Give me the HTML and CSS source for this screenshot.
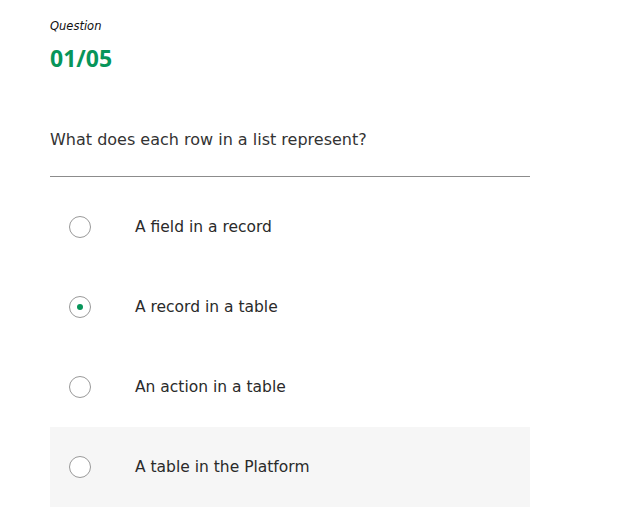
FILE: index.html
```html
<!DOCTYPE html>
<html lang="en">
<head>
    <meta charset="UTF-8">
    <meta name="viewport" content="width=device-width, initial-scale=1.0">
    <title>Quiz</title>
    <link rel="stylesheet" href="styles.css">
</head>
<body>
    <main class="quiz">
        <div class="label">Question</div>
        <div class="counter">01/05</div>
        <p class="question">What does each row in a list represent?</p>
        <div class="options">
            <label class="option">
                <span class="radio"></span>
                <span class="option-text">A field in a record</span>
            </label>
            <label class="option">
                <span class="radio checked"></span>
                <span class="option-text">A record in a table</span>
            </label>
            <label class="option">
                <span class="radio"></span>
                <span class="option-text">An action in a table</span>
            </label>
            <label class="option hover">
                <span class="radio"></span>
                <span class="option-text">A table in the Platform</span>
            </label>
        </div>
    </main>
</body>
</html>
```

FILE: styles.css
```css
body {
    font-family: "DejaVu Sans", "Liberation Sans", sans-serif;
    margin: 0;
    padding: 0;
    background-color: #ffffff;
    color: #222;
}
.quiz {
    width: 480px;
    padding: 19px 0 0 50px;
}
.label {
    font-size: 11.5px;
    font-style: italic;
    line-height: 15px;
    color: #111;
}
.counter {
    font-family: "Open Sans", "Liberation Sans", sans-serif;
    font-weight: bold;
    font-size: 23px;
    line-height: 30px;
    color: #07955a;
    margin-top: 9px;
}
.question {
    font-size: 16px;
    line-height: 20px;
    margin: 57px 0 0;
    padding-bottom: 26px;
    border-bottom: 1px solid #8c8c8c;
    color: #333;
}
.options {
    margin-top: 10px;
}
.option {
    display: flex;
    align-items: center;
    height: 80px;
    padding-left: 19px;
    cursor: pointer;
}
.option.hover {
    background-color: #f6f6f6;
}
.radio {
    width: 20px;
    height: 20px;
    border: 1px solid #999;
    border-radius: 50%;
    background-color: white;
    display: flex;
    align-items: center;
    justify-content: center;
    margin-right: 44px;
}
.radio.checked::after {
    content: "";
    width: 6px;
    height: 6px;
    border-radius: 50%;
    background-color: #07955a;
}
.option-text {
    font-size: 15.5px;
    color: #2a2a2a;
}
```
